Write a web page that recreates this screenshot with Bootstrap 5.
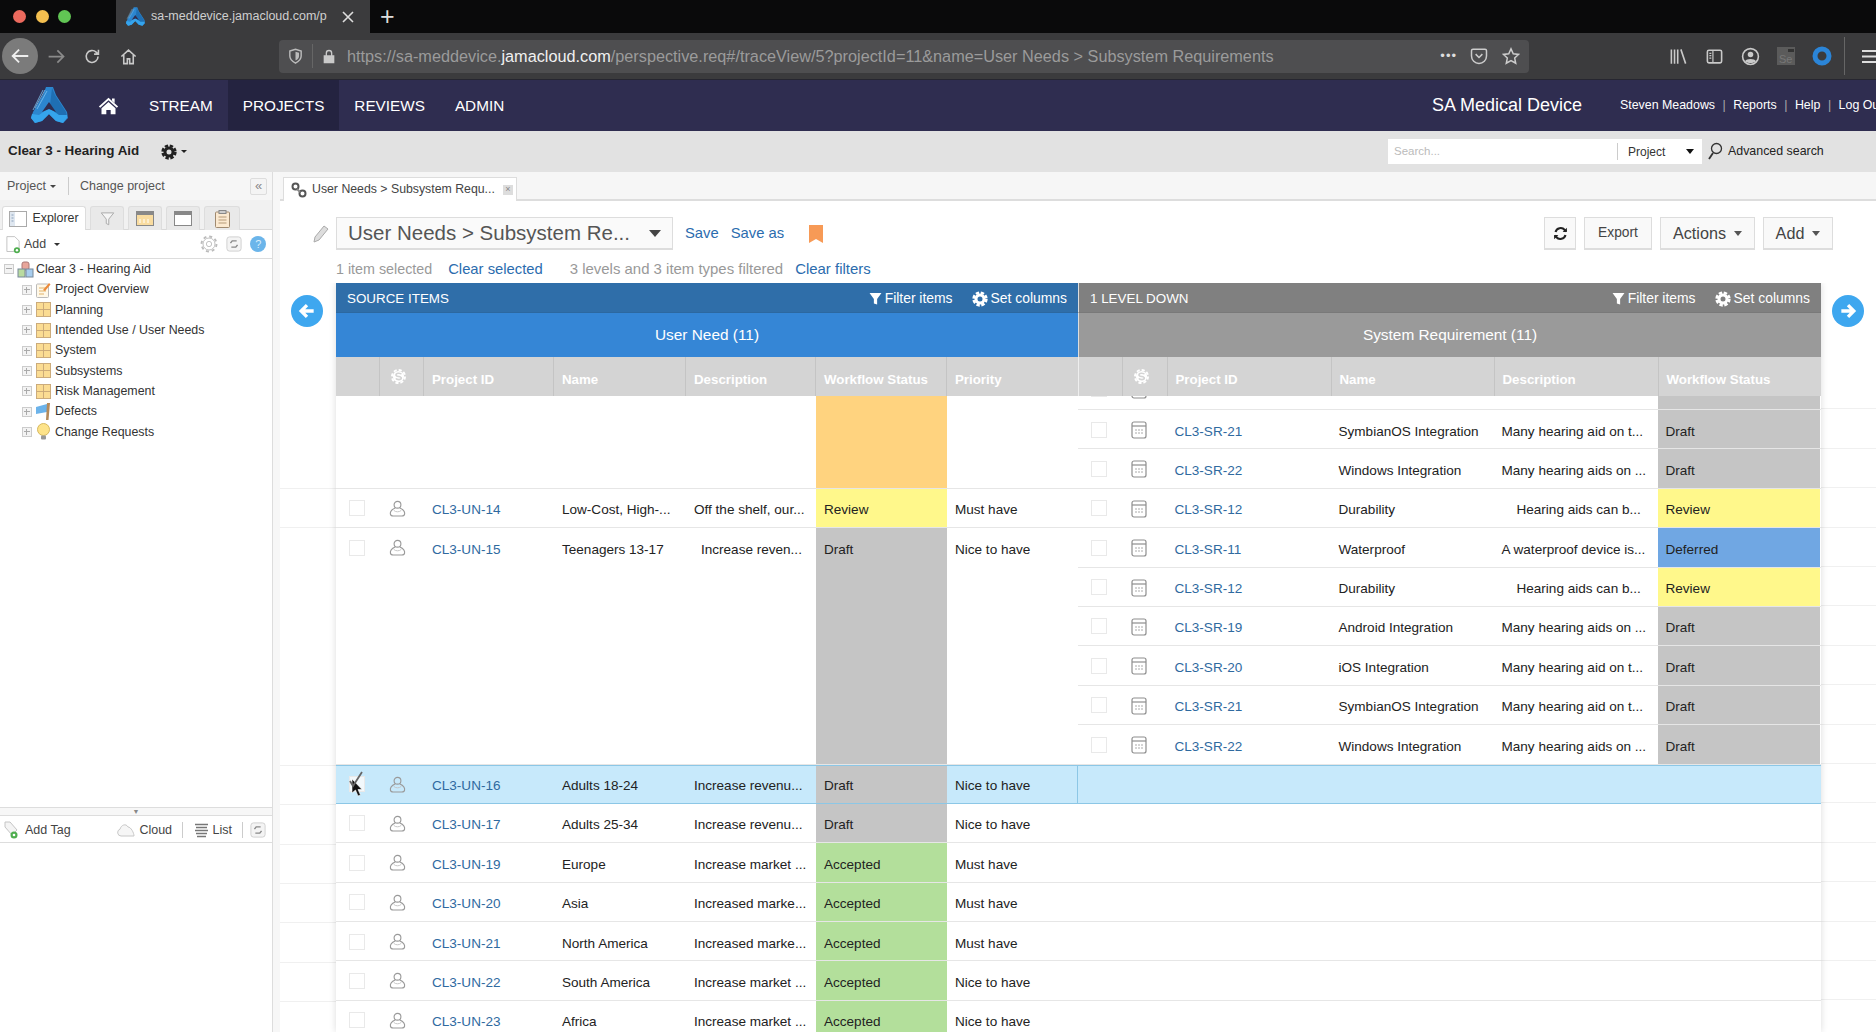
<!DOCTYPE html>
<html lang="en">
<head>
<meta charset="utf-8">
<title>User Needs &gt; Subsystem Requirements</title>
<link href="https://cdn.jsdelivr.net/npm/bootstrap@5.3.0/dist/css/bootstrap.min.css" rel="stylesheet">
<style>
html,body{height:100%;overflow:hidden}
body{font-family:"Liberation Sans",Arial,sans-serif;font-size:13px;color:#222;background:#fff}
.page-col{height:1032px;overflow:hidden}
svg{display:block;flex:none}
.ff-tabs{height:33px;background:#0a0a0b;flex:none}
.light{width:13px;height:13px;border-radius:50%;position:relative}
.lights{width:116px;padding-left:13px;gap:9.5px}
.ff-tab{width:254px;background:#3b3b3d;color:#cfcfcf;font-size:12.5px;padding-left:10px}
.ff-tab .ttl{width:183px;overflow:hidden;white-space:nowrap;margin-left:6px}
.ff-plus{color:#ddd;font-size:25px;font-weight:300;margin-left:10px;line-height:1}
.ff-bar{height:47px;background:#3b3b3d;border-bottom:1px solid #262630;flex:none;color:#c9c9c9}
.ff-back{width:36px;height:36px;border-radius:50%;background:#7b7b7b;margin-left:2px}
.ff-btn{width:36px;display:flex;justify-content:center}
.ff-url{width:1250px;height:33px;background:#4e4e50;border-radius:4px;margin-left:133px;font-size:16.25px;color:#9b9b9b;white-space:nowrap;padding:0 8px}
.ff-url b{font-weight:400;color:#f1f1f1}
.ff-sep{width:1px;height:24px;background:#666}
.ff-right{margin-left:131px;gap:0}
.jm-nav{height:51px;background:#2f2d50;flex:none;padding:0}
.navbar.jm-nav .navbar-nav .nav-link{color:#fff;font-size:15.3px;padding:2px 15px 0;height:50px;display:flex;align-items:center}
.navbar.jm-nav .navbar-nav .nav-link.active{background:#242340;color:#fff}
.brand-slot{width:84px;padding-left:31px}
.home-slot{width:50px;padding-left:13px}
.jm-org{color:#fff;font-size:18px;margin-right:38px}
.jm-user{color:#fff;font-size:12.4px;white-space:nowrap;width:256px;gap:7.5px;overflow:hidden}
.jm-user span{color:#aaa}
.sub-bar{height:41px;background:#e2e2e2;flex:none;padding-left:8px}
.sub-bar .ttl{font-weight:700;font-size:13.4px;margin-right:22px}
.sb-search{width:314px;height:25px;background:#fff;margin-left:auto;font-size:12px}
.sb-search .inp{width:229px;color:#bbb;padding-left:6px;font-size:11.5px}
.sb-search .pj{border-left:1px solid #ccc;height:17px;padding-left:10px;flex:1;color:#333}
.sb-adv{font-size:12.4px;width:174px;color:#222;padding-left:5px;gap:5px}
.lft{width:273px;border-right:1px solid #ddd;flex:none;background:#fff}
.lft-top{height:28px;background:#f6f6f6;font-size:12.5px;color:#555;padding-left:7px}
.lft-top .dv{width:1px;height:18px;background:#ccc;margin:0 11px 0 12px}
.sq{width:17px;height:17px;border:1px solid #ddd;border-radius:2px;background:#f4f4f4;color:#888;font-size:13px;line-height:13px;text-align:center}
.lft-tabs{height:30px;background:#f1f1f1;border-bottom:1px solid #d9d9d9;padding:6px 0 0 2px;gap:4px}
.ltab{height:24px;width:34px;background:#e9e9e9;border:1px solid #ddd;border-bottom:0;border-radius:3px 3px 0 0;display:flex;align-items:center;justify-content:center}
.ltab.on{width:84px;background:#fff;font-size:12.4px;color:#333;gap:5px}
.lft-add{height:29px;border-bottom:1px solid #ddd;padding-left:6px;font-size:12.4px;color:#444}
.tree{height:549px;border-bottom:1px solid #ddd;font-size:12.4px;color:#333;margin:0;padding:0;list-style:none}
.tree li{height:20.35px;display:flex;align-items:center;white-space:nowrap}
.tree .chd{padding-left:18px}
.tree .ic{margin-left:4px;margin-right:4px}
.tree .rt{margin:0 2px 0 3px}
.xp{width:10px;height:10px;border:1px solid #ccc;background:#f3f3f3;position:relative;margin-left:4px;flex:none}
.xp::before{content:"";position:absolute;left:1px;right:1px;top:3px;height:1px;background:#aaa}
.xp.pl::after{content:"";position:absolute;top:1px;bottom:1px;left:3px;width:1px;background:#aaa}
.grip{height:7px;display:flex;justify-content:center;align-items:center;background:#f7f7f7;color:#888;font-size:7px;line-height:1}
.tag-row{height:28px;border-top:1px solid #ddd;border-bottom:1px solid #ddd;padding:2px 0 0 4px;font-size:12.5px;color:#444}
.tag-row .dv{width:1px;height:16px;background:#ccc;margin:0 10px 0 10px}
.splt{width:7px;flex:none;background:#f7f7f7}
.mn{flex:1;min-width:0}
.mn-tabs{height:29px;background:#f6f6f6;border-bottom:2px solid #ddd;padding:5px 0 0 3px;flex:none}
.vtab{width:234px;height:24px;background:#fff;border:1px solid #ddd;border-bottom:0;font-size:12.3px;color:#444;padding-left:7px;gap:5px;white-space:nowrap}
.mn-tool{height:33px;margin-top:16px;padding-left:33px;padding-right:43px;flex:none}
.vsel{width:337px;height:33px;background:#fafafa;border:1px solid #ddd;border-bottom-width:2px;font-size:20.5px;color:#555;padding:0 11px;white-space:nowrap;margin-left:7px;justify-content:space-between}
.lnk{color:#2b6cae;text-decoration:none}
.sv{font-size:14.8px;margin-left:12px}
.tbtn{height:33px;background:#f9f9f9;border:1px solid #ddd;border-bottom-width:2px;border-radius:0;font-size:14px;color:#444;padding:0;display:flex;align-items:center;justify-content:center;gap:8px}
.caret-d{width:0;height:0;border-left:4.5px solid transparent;border-right:4.5px solid transparent;border-top:5px solid #555;display:inline-block}
.mn-info{height:33px;padding-left:56px;font-size:14.95px;color:#999;flex:none;padding-top:9px;line-height:20px}
.wrap-tv{flex:1;min-height:0;overflow:hidden}
.gut-l{width:56px;flex:none;padding:12px 0 0 11px;background:
 linear-gradient(#f0f0f0,#f0f0f0) 0 205px/100% 1px no-repeat,
 linear-gradient(#f0f0f0,#f0f0f0) 0 244px/100% 1px no-repeat,
 linear-gradient(#f0f0f0,#f0f0f0) 0 482px/100% 1px no-repeat,
 linear-gradient(#f0f0f0,#f0f0f0) 0 521px/100% 1px no-repeat,
 linear-gradient(#f0f0f0,#f0f0f0) 0 560.6px/100% 1px no-repeat,
 linear-gradient(#f0f0f0,#f0f0f0) 0 600px/100% 1px no-repeat,
 linear-gradient(#f0f0f0,#f0f0f0) 0 639.4px/100% 1px no-repeat,
 linear-gradient(#f0f0f0,#f0f0f0) 0 678.8px/100% 1px no-repeat,
 linear-gradient(#f0f0f0,#f0f0f0) 0 718.2px/100% 1px no-repeat}
.gut-r{flex:1;padding:12px 0 0 11px;background-image:repeating-linear-gradient(to bottom,#fff 0,#fff 38.4px,#f0f0f0 38.4px,#f0f0f0 39.4px);background-position:0 86.6px;background-repeat:no-repeat}
.circ{width:32px;height:32px;border-radius:50%;background:#3ea7ef;display:flex;align-items:center;justify-content:center}
.tv{width:1485px;flex:none;box-shadow:0 0 7px rgba(0,0,0,.14);background:#fff;position:relative}
.pane{flex:none}
.p-s{width:742px}
.p-t{width:743px}
.h1b{height:29.5px;color:#fff;padding:3px 11px 0 11px;font-size:13.4px;border-bottom:1px solid rgba(0,0,0,.05)}
.h1b .fi{font-size:13.9px;gap:3px}
.s1{background:#2f6ea9}
.s2{background:#3586d6}
.t1{background:#808080;border-left:1px solid #ddd}
.t2{background:#9a9a9a;border-left:1px solid #ddd}
.h2b{height:44.5px;color:#fff;font-size:15.4px}
.hd{height:39px;background:#d4d4d4}
.hd>div{border-right:1px solid #c4c4c4;color:#fff;font-weight:700;font-size:13.3px;padding:7px 0 0 8px;display:flex;align-items:center;white-space:nowrap;flex:none}
.hd .iconcol{padding:0 0 0 7px}
.w-a{width:44px}.w-b{width:44px}.w-c{width:130px}.w-d{width:132px}.w-e{width:130px}.w-f{width:131px}.w-g{width:131px}
.x-a{width:44px}.x-b{width:44.5px}.x-c{width:164px}.x-d{width:163px}.x-e{width:164px}.x-f{width:162.5px}
.bdy{height:636px;overflow:hidden}
.grp{border-bottom:1px solid #e6e6e6;display:flex}
.srcs{width:742px;display:flex;flex:none}
.tgts{width:743px;flex:none}
.cl{padding:11.5px 0 0 8px;line-height:19px;white-space:nowrap;overflow:hidden;flex:none;font-size:13.55px;color:#222}
.rw{display:flex;height:39.4px;border-bottom:1px solid #e6e6e6;flex:none}
.tgts>.rw:last-child{border-bottom:0;height:38.4px}
.clip{height:14px;overflow:hidden;display:flex;align-items:flex-end;border-bottom:1px solid #e6e6e6}
.clip .rw{border:0}
.id{color:#2f6a9f}
.in{padding-left:15px}
.in2{padding-left:23px}
.ck{width:16px;height:16px;border:1px solid #e9e9e9;background:#fff;margin:0 0 0 5px}
.cl.ic-c{padding:11px 0 0 9px}
.st-o{background:#ffd37f}.st-r{background:#fff88b}.st-d{background:#c5c5c5}.st-a{background:#b3df9b}.st-f{background:#70a7e3}
.r-sel{background:#c7e9fb;border-top:1px solid #8cc7e6;border-bottom:1px solid #8cc7e6}
.r-sel .cl{padding-top:10.5px}
.pos-ck{position:relative}
.cursor{position:absolute;left:15px;top:12px}
</style>
</head>
<body>
<svg width="0" height="0" style="position:absolute">
<defs>
<symbol id="i-jama" viewBox="0 0 37 36"><path d="M15 0h7l3 8 11 17 1 6-5 5-7-2-7-7-7 7-7 2-4-5 2-6L12 8z" fill="#2c86cf"/><path d="M21 1l3 7 11 17 1 6-5 4-7-2-6-6z" fill="#1f6fb3"/><path d="M1 27l7 1 10-7 10 7 8 0 0 3-4 5-7-2-7-7-7 7-7 2-4-5z" fill="#35a4ec"/><path d="M18 15l7 10-7-3-7 3z" fill="#2f2d50"/><path d="M14 3L4 21M12 3L2 23M16 4L6 22" stroke="#7cc0ee" stroke-width=".8" fill="none"/></symbol>
<symbol id="i-arrow" viewBox="0 0 24 24"><path d="M21 12H4M11 5l-7 7 7 7" fill="none" stroke="currentColor" stroke-width="2"/></symbol>
<symbol id="i-arrowr" viewBox="0 0 24 24"><path d="M3 12h17M13 5l7 7-7 7" fill="none" stroke="currentColor" stroke-width="2"/></symbol>
<symbol id="i-reload" viewBox="0 0 24 24"><path d="M19 12a7.500 7.500 0 1 1-2.400-5.500L19 9M19.500 3.500V9H14" fill="none" stroke="currentColor" stroke-width="2"/></symbol>
<symbol id="i-home" viewBox="0 0 24 24"><path d="M3 12l9-8 9 8M6 10v11h4.500v-6h3v6H18V10" fill="none" stroke="currentColor" stroke-width="2"/></symbol>
<symbol id="i-homef" viewBox="0 0 24 24"><path d="M12 3l11 10-1.500 1.500L12 6 2.500 14.500 1 13zM16 4h3v5l-3-2.700zM12 8l8 7v7h-5.500v-5h-5v5H4v-7z" fill="#fff"/></symbol>
<symbol id="i-shield" viewBox="0 0 24 24"><path d="M4 5l8-2.500L20 5v7c0 5-4 8-8 10-4-2-8-5-8-10z" fill="none" stroke="currentColor" stroke-width="2"/><path d="M12 6l5 1.500V12c0 3-2 5-5 6.500z" fill="currentColor"/></symbol>
<symbol id="i-lock" viewBox="0 0 24 24"><path d="M7 10V7a5 5 0 0 1 10 0v3M4 10h16v12H4z" fill="currentColor"/><path d="M9 10V7a3 3 0 0 1 6 0v3z" fill="#4e4e50"/></symbol>
<symbol id="i-pocket" viewBox="0 0 24 24"><path d="M4 3h16a2 2 0 0 1 2 2v7a10 10 0 0 1-20 0V5a2 2 0 0 1 2-2zM7.500 9.500l4.500 4.500 4.500-4.500" fill="none" stroke="currentColor" stroke-width="2"/></symbol>
<symbol id="i-star" viewBox="0 0 24 24"><path d="M12 2.500l3 6.500 7 .9-5.100 4.800 1.400 7L12 18.200l-6.300 3.500 1.400-7L2 9.900 9 9z" fill="none" stroke="currentColor" stroke-width="2"/></symbol>
<symbol id="i-lib" viewBox="0 0 24 24"><path d="M3 3v18M7 3v18M11 3v18M15 3l6 18" fill="none" stroke="currentColor" stroke-width="2"/></symbol>
<symbol id="i-side" viewBox="0 0 24 24"><rect x="3" y="4" width="18" height="16" rx="2" fill="none" stroke="currentColor" stroke-width="2"/><path d="M10 4v16M5.500 8H8M5.500 11H8M5.500 14H8" stroke="currentColor" stroke-width="1.500"/></symbol>
<symbol id="i-acct" viewBox="0 0 24 24"><circle cx="12" cy="12" r="10" fill="none" stroke="currentColor" stroke-width="2"/><circle cx="12" cy="9.500" r="3.500" fill="currentColor"/><path d="M5 18c2-4 12-4 14 0-3 3-11 3-14 0z" fill="currentColor"/></symbol>
<symbol id="i-gear" viewBox="0 0 24 24"><circle cx="12" cy="12" r="6" fill="none" stroke="currentColor" stroke-width="4.500"/><circle cx="12" cy="12" r="9.500" fill="none" stroke="currentColor" stroke-width="4" stroke-dasharray="5 2.460"/></symbol>
<symbol id="i-gearo" viewBox="0 0 24 24"><circle cx="12" cy="12" r="3.500" fill="none" stroke="currentColor" stroke-width="1.200"/><circle cx="12" cy="12" r="8" fill="none" stroke="currentColor" stroke-width="1.200"/><circle cx="12" cy="12" r="10" fill="none" stroke="currentColor" stroke-width="2.500" stroke-dasharray="4 3.850"/></symbol>
<symbol id="i-funnel" viewBox="0 0 24 24"><path d="M1 2h22l-8 11v10l-6-2v-8z" fill="currentColor"/></symbol>
<symbol id="i-funnelo" viewBox="0 0 24 24"><path d="M2 3h20l-8 10v9l-4-2v-7z" fill="#f5f5f5" stroke="#a8a8a8" stroke-width="1.500"/></symbol>
<symbol id="i-pers" viewBox="0 0 18 18"><circle cx="9" cy="5" r="3.600" fill="none" stroke="#9a9a9a" stroke-width="1.200"/><path d="M6.500 8.500C3 10 1 12 1.500 15c.2 1.500 2 2 3 2h9c1 0 2.800-.5 3-2 .5-3-1.500-5-5-6.500" fill="none" stroke="#9a9a9a" stroke-width="1.200"/><path d="M5 11c2 2 6 2 8 0" fill="none" stroke="#c4c4c4"/></symbol>
<symbol id="i-doc" viewBox="0 0 16 18"><rect x="1" y="1" width="14" height="16" rx="2" fill="#fff" stroke="#8e8e8e" stroke-width="1.200"/><path d="M1 5h14" stroke="#8e8e8e" stroke-width="1.200"/><path d="M4 9h2M7 9h2M10 9h2M4 12h2M7 12h2M10 12h2" stroke="#aaa"/></symbol>
<symbol id="i-grid" viewBox="0 0 16 16"><rect x=".5" y=".5" width="15" height="15" fill="#fbdc93" stroke="#c9a877"/><path d="M8 1v14M1 8h14" stroke="#c9a877"/></symbol>
<symbol id="i-filetag" viewBox="0 0 16 20"><path d="M1 1h9l5 5v12H1z" fill="#fff" stroke="#bdbdbd"/><circle cx="12.500" cy="16.500" r="3.500" fill="#4fae4f"/><circle cx="12.500" cy="16.500" r="1.400" fill="#fff"/></symbol>
<symbol id="i-sync" viewBox="0 0 18 18"><rect x="1" y="1" width="16" height="16" rx="3" fill="#f4f4f4" stroke="#ccc"/><path d="M5 8l2-2.500h5M13 10l-2 2.500H6" fill="none" stroke="#888" stroke-width="1.600"/></symbol>
<symbol id="i-refresh" viewBox="0 0 24 24"><path d="M5 10a7.500 7.500 0 0 1 13-3l2 2M19 14a7.500 7.500 0 0 1-13 3l-2-2" fill="none" stroke="#222" stroke-width="3"/><path d="M21 4v6h-6zM3 20v-6h6z" fill="#222"/></symbol>
<symbol id="i-back" viewBox="0 0 24 24"><path d="M20 12H6M12 5l-7 7 7 7" fill="none" stroke="#fff" stroke-width="4"/></symbol>
<symbol id="i-fwd" viewBox="0 0 24 24"><path d="M4 12h14M12 5l7 7-7 7" fill="none" stroke="#fff" stroke-width="4"/></symbol>
<symbol id="i-scol" viewBox="0 0 24 24"><circle cx="12" cy="12" r="9" fill="#fff"/><circle cx="12" cy="12" r="10.500" fill="none" stroke="#fff" stroke-width="3" stroke-dasharray="5 3.240"/><path d="M16.500 8.500c-1-2.500-8.500-2.500-8.500 1s8.500 1.500 8.500 5-7.500 3-8.500.5" fill="none" stroke="#d4d4d4" stroke-width="2.600"/></symbol>
</defs>
</svg>

<div class="page-col d-flex flex-column">
  <!-- browser tabs -->
  <div class="ff-tabs d-flex align-items-center">
    <div class="lights d-flex align-items-center">
      <span class="light" style="background:#ec6a5e"></span><span class="light" style="background:#f4bf4f"></span><span class="light" style="background:#61c554"></span>
    </div>
    <div class="ff-tab h-100 d-flex align-items-center">
      <svg width="19" height="19"><use href="#i-jama"/></svg>
      <span class="ttl">sa-meddevice.jamacloud.com/p</span>
      <svg class="ms-2" width="12" height="12" viewBox="0 0 12 12"><path d="M1 1l10 10M11 1L1 11" stroke="#ddd" stroke-width="1.600"/></svg>
    </div>
    <span class="ff-plus">+</span>
  </div>
  <!-- browser toolbar -->
  <div class="ff-bar d-flex align-items-center">
    <div class="ff-back d-flex align-items-center justify-content-center" style="color:#eee"><svg width="22" height="22"><use href="#i-arrow"/></svg></div>
    <div class="ff-btn" style="color:#8b8b8b"><svg width="21" height="21"><use href="#i-arrowr"/></svg></div>
    <div class="ff-btn"><svg width="19" height="19"><use href="#i-reload"/></svg></div>
    <div class="ff-btn"><svg width="19" height="19"><use href="#i-home"/></svg></div>
    <div class="ff-url d-flex align-items-center">
      <svg width="17" height="18" style="color:#bbb"><use href="#i-shield"/></svg>
      <span class="ff-sep mx-2"></span>
      <svg width="16" height="17" style="color:#c9c9c9"><use href="#i-lock"/></svg>
      <span class="flex-grow-1" style="margin-left:10px">https://sa-meddevice.<b>jamacloud.com</b>/perspective.req#/traceView/5?projectId=11&amp;name=User Needs &gt; Subsystem Requirements</span>
      <span style="color:#ddd;font-size:13px;letter-spacing:1px;margin-right:13px">•••</span>
      <svg width="18" height="18" style="color:#ccc;margin-right:14px"><use href="#i-pocket"/></svg>
      <svg width="18" height="18" style="color:#ccc;margin-right:1px"><use href="#i-star"/></svg>
    </div>
    <div class="ff-right d-flex align-items-center">
      <div class="ff-btn"><svg width="19" height="19"><use href="#i-lib"/></svg></div>
      <div class="ff-btn"><svg width="19" height="19"><use href="#i-side"/></svg></div>
      <div class="ff-btn"><svg width="19" height="19"><use href="#i-acct"/></svg></div>
      <div class="ff-btn"><svg width="18" height="18" viewBox="0 0 18 18"><rect width="18" height="18" fill="#5b5b5b"/><rect x="11" y="2" width="6" height="3" fill="#333"/><text x="2" y="16" font-size="11" fill="#777" font-family="Liberation Sans">Se</text></svg></div>
      <div class="ff-btn"><svg width="20" height="20" viewBox="0 0 20 20"><circle cx="10" cy="10" r="7" fill="none" stroke="#2b85d8" stroke-width="5"/></svg></div>
      <span class="ff-sep" style="margin-left:4px;height:38px"></span>
      <div style="width:31px;padding-left:17px"><svg width="14" height="15" viewBox="0 0 14 15"><path d="M0 2h14M0 7.500h14M0 13h14" stroke="#ddd" stroke-width="2"/></svg></div>
    </div>
  </div>
  <!-- app nav -->
  <nav class="navbar navbar-expand jm-nav d-flex align-items-start">
    <div class="brand-slot d-flex align-items-center" style="height:50px"><svg width="37" height="36"><use href="#i-jama"/></svg></div>
    <div class="home-slot d-flex align-items-center" style="height:50px"><svg width="23" height="21"><use href="#i-homef"/></svg></div>
    <ul class="navbar-nav">
      <li class="nav-item"><a class="nav-link" href="#">STREAM</a></li>
      <li class="nav-item"><a class="nav-link active" href="#">PROJECTS</a></li>
      <li class="nav-item"><a class="nav-link" href="#">REVIEWS</a></li>
      <li class="nav-item"><a class="nav-link" href="#">ADMIN</a></li>
    </ul>
    <div class="ms-auto d-flex align-items-center" style="height:50px">
      <span class="jm-org">SA Medical Device</span>
      <div class="jm-user d-flex align-items-center">Steven Meadows <span>|</span> Reports <span>|</span> Help <span>|</span> Log Out</div>
    </div>
  </nav>
  <!-- project bar -->
  <div class="sub-bar d-flex align-items-center">
    <span class="ttl">Clear 3 - Hearing Aid</span>
    <svg width="16" height="16" style="color:#222"><use href="#i-gear"/></svg>
    <span class="caret-d ms-1" style="border-top-color:#222;border-width:3.500px 3px 0"></span>
    <div class="sb-search d-flex align-items-center">
      <span class="inp">Search...</span>
      <span class="pj d-flex align-items-center justify-content-between pe-2">Project <span class="caret-d" style="border-top-color:#111"></span></span>
    </div>
    <div class="sb-adv d-flex align-items-center">
      <svg width="16" height="18" viewBox="0 0 16 18"><circle cx="9.500" cy="6.500" r="5" fill="none" stroke="#333" stroke-width="1.300"/><path d="M6 11l-4 6" stroke="#333" stroke-width="1.800"/></svg>
      Advanced search
    </div>
  </div>

  <div class="d-flex flex-grow-1" style="min-height:0">
    <!-- left panel -->
    <aside class="lft d-flex flex-column">
      <div class="lft-top d-flex align-items-center">
        Project <span class="caret-d ms-1" style="border-width:3.500px 3px 0;border-top-color:#444"></span>
        <span class="dv"></span> Change project
        <span class="sq ms-auto" style="margin-right:5px">«</span>
      </div>
      <div class="lft-tabs d-flex">
        <div class="ltab on">
          <svg width="18" height="16" viewBox="0 0 18 16"><rect x=".5" y=".5" width="17" height="15" fill="#fff" stroke="#aaa"/><rect x="1" y="1" width="5" height="14" fill="#dfe7f0"/><path d="M2.500 4h2M2.500 7h2M2.500 10h2" stroke="#8aa0bb"/></svg>Explorer
        </div>
        <div class="ltab"><svg width="15" height="17"><use href="#i-funnelo"/></svg></div>
        <div class="ltab"><svg width="18" height="15" viewBox="0 0 18 15"><rect x=".5" y=".5" width="17" height="14" fill="#f9dca0" stroke="#888"/><rect x="1" y="1" width="16" height="3" fill="#888"/><path d="M4 8v4M8 8v4M12 8v4" stroke="#fff"/></svg></div>
        <div class="ltab"><svg width="18" height="15" viewBox="0 0 18 15"><rect x=".5" y=".5" width="17" height="14" fill="#fff" stroke="#888"/><rect x="1" y="1" width="16" height="3" fill="#888"/></svg></div>
        <div class="ltab" style="width:36px"><svg width="15" height="18" viewBox="0 0 15 18"><rect x=".5" y="2" width="14" height="15.500" rx="1" fill="#fbe9d0" stroke="#a08a70"/><rect x="4" y=".5" width="7" height="3" fill="#ccc" stroke="#888"/><path d="M3.500 7h8M3.500 10h8M3.500 13h8" stroke="#b59a78"/></svg></div>
      </div>
      <div class="lft-add d-flex align-items-center">
        <svg width="14" height="19"><use href="#i-filetag"/></svg>
        <span class="ms-1">Add</span><span class="caret-d ms-2" style="border-width:3.500px 3px 0;border-top-color:#333"></span>
        <svg class="ms-auto" width="18" height="18" style="color:#bbb"><use href="#i-gearo"/></svg>
        <svg class="ms-2" width="16" height="16"><use href="#i-sync"/></svg>
        <svg style="margin:0 6px 0 8px" width="16" height="16" viewBox="0 0 16 16"><circle cx="8" cy="8" r="8" fill="#6bb5ea"/><text x="5.200" y="12" font-size="11" fill="#d8eefc" font-family="Liberation Sans">?</text></svg>
      </div>
      <ul class="tree">
        <li><span class="xp"></span><svg class="rt" width="17" height="17" viewBox="0 0 17 17"><rect x="5" y="1" width="7" height="8" rx="2" fill="#e8a59a" stroke="#a77"/><rect x="1" y="8" width="7" height="8" fill="#b9dba0" stroke="#789"/><rect x="9" y="8" width="7" height="8" fill="#a8cdee" stroke="#789"/></svg>Clear 3 - Hearing Aid</li>
        <li class="chd"><span class="xp pl"></span><svg class="ic" width="15" height="16" viewBox="0 0 15 16"><rect x=".5" y="2" width="12" height="13.500" rx="1" fill="#fff8e8" stroke="#bbb"/><path d="M3 6h7M3 9h7M3 12h5" stroke="#e0b36a"/><path d="M7 8l6-7 1.500 1.500L9 9z" fill="#ec8a3a"/></svg>Project Overview</li>
        <li class="chd"><span class="xp pl"></span><svg class="ic" width="15" height="15"><use href="#i-grid"/></svg>Planning</li>
        <li class="chd"><span class="xp pl"></span><svg class="ic" width="15" height="15"><use href="#i-grid"/></svg>Intended Use / User Needs</li>
        <li class="chd"><span class="xp pl"></span><svg class="ic" width="15" height="15"><use href="#i-grid"/></svg>System</li>
        <li class="chd"><span class="xp pl"></span><svg class="ic" width="15" height="15"><use href="#i-grid"/></svg>Subsystems</li>
        <li class="chd"><span class="xp pl"></span><svg class="ic" width="15" height="15"><use href="#i-grid"/></svg>Risk Management</li>
        <li class="chd"><span class="xp pl"></span><svg class="ic" width="15" height="17" viewBox="0 0 15 17"><path d="M0 4l11-3v8L0 11z" fill="#6cb3ea"/><path d="M11 0h3l-1.500 17H10z" fill="#b58a5a"/></svg>Defects</li>
        <li class="chd"><span class="xp pl"></span><svg class="ic" width="15" height="17" viewBox="0 0 15 17"><circle cx="7.500" cy="6.500" r="6" fill="#fde38a" stroke="#d7b85e"/><rect x="5" y="12.500" width="5" height="4" rx="1" fill="#999"/></svg>Change Requests</li>
      </ul>
      <div class="grip">▼</div>
      <div class="tag-row d-flex align-items-center">
        <svg width="14" height="18" viewBox="0 0 14 18"><path d="M1 1h5l7 8-5 5-7-8z" fill="#f4f4f4" stroke="#c4c4c4"/><circle cx="10" cy="14" r="3.500" fill="#4fae4f"/><circle cx="10" cy="14" r="1.300" fill="#fff"/></svg>
        <span style="margin-left:7px">Add Tag</span>
        <svg class="ms-auto me-1" width="18" height="14" viewBox="0 0 18 14"><path d="M4 13a3.500 3.500 0 0 1-1-6.800C4 2 9 0 11 4c3 0 6 6 6 9z" fill="#f6f6f6" stroke="#c8c8c8"/></svg>Cloud
        <span class="dv" style="margin:0 11px 0 9.5px"></span>
        <svg class="me-1" width="15" height="15" viewBox="0 0 15 15"><path d="M1 1.500h13M2 4.500h11M1 7.500h13M2 10.500h11M3 13.500h9" stroke="#777" stroke-width="1.300"/></svg>List
        <span class="dv" style="margin-right:7px"></span>
        <svg style="margin-right:6px" width="16" height="18"><use href="#i-sync"/></svg>
      </div>
    </aside>
    <div class="splt"></div>

    <!-- main -->
    <main class="mn d-flex flex-column">
      <div class="mn-tabs d-flex">
        <div class="vtab d-flex align-items-center">
          <svg width="16" height="16" viewBox="0 0 16 16"><circle cx="4.500" cy="4.500" r="3" fill="none" stroke="#555" stroke-width="2"/><circle cx="11.500" cy="11.500" r="3" fill="none" stroke="#555" stroke-width="2"/><path d="M6 7l3 3" stroke="#888" stroke-width="2"/></svg>
          User Needs &gt; Subsystem Requ...
          <span class="ms-auto d-flex align-items-center justify-content-center" style="width:10px;height:10px;background:#ddd;color:#888;font-size:9px;margin-right:3px;line-height:1">×</span>
        </div>
      </div>
      <div class="mn-tool d-flex align-items-center">
        <svg width="16" height="18" viewBox="0 0 16 18"><path d="M11 1l4 3L6 15l-5 2 1-5z" fill="#ddd" stroke="#aaa"/></svg>
        <div class="vsel d-flex align-items-center">User Needs &gt; Subsystem Re...<span class="caret-d" style="border-width:7px 6px 0;border-top-color:#444"></span></div>
        <a class="lnk sv" href="#">Save</a><a class="lnk sv" href="#">Save as</a>
        <svg style="margin-left:25px" width="14" height="18" viewBox="0 0 14 18"><path d="M0 0h14v18l-7-4-7 4z" fill="#f79a56"/></svg>
        <div class="ms-auto d-flex gap-2">
          <button class="btn tbtn" style="width:32px" type="button" aria-label="Refresh"><svg width="17" height="17"><use href="#i-refresh"/></svg></button>
          <button class="btn tbtn" style="width:68px;font-size:13.8px" type="button">Export</button>
          <button class="btn tbtn" style="width:95px;font-size:16.2px" type="button">Actions <span class="caret-d"></span></button>
          <button class="btn tbtn" style="width:70px;font-size:16.2px" type="button">Add <span class="caret-d"></span></button>
        </div>
      </div>
      <div class="mn-info d-flex">
        <span style="font-size:14.3px">1 item selected</span><a class="lnk" style="margin-left:16px;font-size:14.8px" href="#">Clear selected</a>
        <span style="margin-left:27px">3 levels and 3 item types filtered</span><a class="lnk" style="margin-left:12px" href="#">Clear filters</a>
      </div>

      <div class="wrap-tv d-flex">
        <div class="gut-l"><div class="circ"><svg width="20" height="20"><use href="#i-back"/></svg></div></div>
        <div class="tv">
          <div class="d-flex">
            <div class="pane p-s">
              <div class="h1b s1 d-flex align-items-center justify-content-between"><span>SOURCE ITEMS</span><span class="fi d-flex align-items-center"><svg width="13" height="15" style="color:#fff"><use href="#i-funnel"/></svg>Filter items<svg class="ms-3" width="16" height="16" style="color:#fff"><use href="#i-gear"/></svg>Set columns</span></div>
              <div class="h2b s2 d-flex align-items-center justify-content-center">User Need (11)</div>
              <div class="hd d-flex"><div class="w-a"></div><div class="w-b iconcol"><svg class="ms-1" width="15" height="15"><use href="#i-scol"/></svg></div><div class="w-c">Project ID</div><div class="w-d">Name</div><div class="w-e">Description</div><div class="w-f">Workflow Status</div><div class="w-g" style="border:0">Priority</div></div>
            </div>
            <div class="pane p-t">
              <div class="h1b t1 d-flex align-items-center justify-content-between"><span>1 LEVEL DOWN</span><span class="fi d-flex align-items-center"><svg width="13" height="15" style="color:#fff"><use href="#i-funnel"/></svg>Filter items<svg class="ms-3" width="16" height="16" style="color:#fff"><use href="#i-gear"/></svg>Set columns</span></div>
              <div class="h2b t2 d-flex align-items-center justify-content-center">System Requirement (11)</div>
              <div class="hd d-flex" style="border-left:1px solid #eee"><div class="x-a"></div><div class="x-b iconcol"><svg class="ms-1" width="15" height="15"><use href="#i-scol"/></svg></div><div class="x-c">Project ID</div><div class="x-d">Name</div><div class="x-e">Description</div><div class="x-f" style="border:0">Workflow Status</div></div>
            </div>
          </div>

          <div class="bdy">
            <div class="grp">
              <div class="srcs"><div class="cl w-a"></div><div class="cl w-b"></div><div class="cl w-c"></div><div class="cl w-d"></div><div class="cl w-e"></div><div class="cl w-f st-o"></div><div class="cl w-g"></div></div>
              <div class="tgts">
                <div class="clip"><div class="rw">
                  <div class="cl x-a"><div class="ck"></div></div><div class="cl x-b ic-c"><svg width="16" height="18"><use href="#i-doc"/></svg></div><div class="cl x-c"></div><div class="cl x-d"></div><div class="cl x-e"></div><div class="cl x-f st-d"></div>
                </div></div>
                <div class="rw"><div class="cl x-a"><div class="ck"></div></div><div class="cl x-b ic-c"><svg width="16" height="18"><use href="#i-doc"/></svg></div><div class="cl x-c id">CL3-SR-21</div><div class="cl x-d">SymbianOS Integration</div><div class="cl x-e">Many hearing aid on t...</div><div class="cl x-f st-d">Draft</div></div>
                <div class="rw"><div class="cl x-a"><div class="ck"></div></div><div class="cl x-b ic-c"><svg width="16" height="18"><use href="#i-doc"/></svg></div><div class="cl x-c id">CL3-SR-22</div><div class="cl x-d">Windows Integration</div><div class="cl x-e">Many hearing aids on ...</div><div class="cl x-f st-d">Draft</div></div>
              </div>
            </div>
            <div class="grp">
              <div class="srcs"><div class="cl w-a"><div class="ck"></div></div><div class="cl w-b ic-c"><svg width="17" height="17"><use href="#i-pers"/></svg></div><div class="cl w-c id">CL3-UN-14</div><div class="cl w-d">Low-Cost, High-...</div><div class="cl w-e">Off the shelf, our...</div><div class="cl w-f st-r">Review</div><div class="cl w-g">Must have</div></div>
              <div class="tgts">
                <div class="rw"><div class="cl x-a"><div class="ck"></div></div><div class="cl x-b ic-c"><svg width="16" height="18"><use href="#i-doc"/></svg></div><div class="cl x-c id">CL3-SR-12</div><div class="cl x-d">Durability</div><div class="cl x-e in2">Hearing aids can b...</div><div class="cl x-f st-r">Review</div></div>
              </div>
            </div>
            <div class="grp">
              <div class="srcs"><div class="cl w-a"><div class="ck"></div></div><div class="cl w-b ic-c"><svg width="17" height="17"><use href="#i-pers"/></svg></div><div class="cl w-c id">CL3-UN-15</div><div class="cl w-d">Teenagers 13-17</div><div class="cl w-e in">Increase reven...</div><div class="cl w-f st-d">Draft</div><div class="cl w-g">Nice to have</div></div>
              <div class="tgts">
                <div class="rw"><div class="cl x-a"><div class="ck"></div></div><div class="cl x-b ic-c"><svg width="16" height="18"><use href="#i-doc"/></svg></div><div class="cl x-c id">CL3-SR-11</div><div class="cl x-d">Waterproof</div><div class="cl x-e">A waterproof device is...</div><div class="cl x-f st-f">Deferred</div></div>
                <div class="rw"><div class="cl x-a"><div class="ck"></div></div><div class="cl x-b ic-c"><svg width="16" height="18"><use href="#i-doc"/></svg></div><div class="cl x-c id">CL3-SR-12</div><div class="cl x-d">Durability</div><div class="cl x-e in2">Hearing aids can b...</div><div class="cl x-f st-r">Review</div></div>
                <div class="rw"><div class="cl x-a"><div class="ck"></div></div><div class="cl x-b ic-c"><svg width="16" height="18"><use href="#i-doc"/></svg></div><div class="cl x-c id">CL3-SR-19</div><div class="cl x-d">Android Integration</div><div class="cl x-e">Many hearing aids on ...</div><div class="cl x-f st-d">Draft</div></div>
                <div class="rw"><div class="cl x-a"><div class="ck"></div></div><div class="cl x-b ic-c"><svg width="16" height="18"><use href="#i-doc"/></svg></div><div class="cl x-c id">CL3-SR-20</div><div class="cl x-d">iOS Integration</div><div class="cl x-e">Many hearing aid on t...</div><div class="cl x-f st-d">Draft</div></div>
                <div class="rw"><div class="cl x-a"><div class="ck"></div></div><div class="cl x-b ic-c"><svg width="16" height="18"><use href="#i-doc"/></svg></div><div class="cl x-c id">CL3-SR-21</div><div class="cl x-d">SymbianOS Integration</div><div class="cl x-e">Many hearing aid on t...</div><div class="cl x-f st-d">Draft</div></div>
                <div class="rw"><div class="cl x-a"><div class="ck"></div></div><div class="cl x-b ic-c"><svg width="16" height="18"><use href="#i-doc"/></svg></div><div class="cl x-c id">CL3-SR-22</div><div class="cl x-d">Windows Integration</div><div class="cl x-e">Many hearing aids on ...</div><div class="cl x-f st-d">Draft</div></div>
              </div>
            </div>
            <div class="rw r-sel">
              <div class="cl w-a pos-ck"><div class="ck" style="background:#f2f8fb"></div>
                <svg class="cursor" width="11" height="19" viewBox="0 0 11 19"><path d="M1 1v14l3.500-3 2.500 6 2.500-1-2.500-5.500H11z" fill="#111" stroke="#fff" stroke-width=".6"/></svg>
                <svg class="position-absolute" style="left:11px;top:5px" width="17" height="18" viewBox="0 0 17 18"><path d="M3 10l3 5 9-14" fill="none" stroke="#666" stroke-width="1.800"/></svg>
              </div>
              <div class="cl w-b ic-c"><svg width="17" height="17"><use href="#i-pers"/></svg></div><div class="cl w-c id">CL3-UN-16</div><div class="cl w-d">Adults 18-24</div><div class="cl w-e">Increase revenu...</div><div class="cl w-f st-d">Draft</div><div class="cl w-g" style="border-right:1px solid #8cc7e6">Nice to have</div>
            </div>
            <div class="rw"><div class="cl w-a"><div class="ck"></div></div><div class="cl w-b ic-c"><svg width="17" height="17"><use href="#i-pers"/></svg></div><div class="cl w-c id">CL3-UN-17</div><div class="cl w-d">Adults 25-34</div><div class="cl w-e">Increase revenu...</div><div class="cl w-f st-d">Draft</div><div class="cl w-g">Nice to have</div></div>
            <div class="rw"><div class="cl w-a"><div class="ck"></div></div><div class="cl w-b ic-c"><svg width="17" height="17"><use href="#i-pers"/></svg></div><div class="cl w-c id">CL3-UN-19</div><div class="cl w-d">Europe</div><div class="cl w-e">Increase market ...</div><div class="cl w-f st-a">Accepted</div><div class="cl w-g">Must have</div></div>
            <div class="rw"><div class="cl w-a"><div class="ck"></div></div><div class="cl w-b ic-c"><svg width="17" height="17"><use href="#i-pers"/></svg></div><div class="cl w-c id">CL3-UN-20</div><div class="cl w-d">Asia</div><div class="cl w-e">Increased marke...</div><div class="cl w-f st-a">Accepted</div><div class="cl w-g">Must have</div></div>
            <div class="rw"><div class="cl w-a"><div class="ck"></div></div><div class="cl w-b ic-c"><svg width="17" height="17"><use href="#i-pers"/></svg></div><div class="cl w-c id">CL3-UN-21</div><div class="cl w-d">North America</div><div class="cl w-e">Increased marke...</div><div class="cl w-f st-a">Accepted</div><div class="cl w-g">Must have</div></div>
            <div class="rw"><div class="cl w-a"><div class="ck"></div></div><div class="cl w-b ic-c"><svg width="17" height="17"><use href="#i-pers"/></svg></div><div class="cl w-c id">CL3-UN-22</div><div class="cl w-d">South America</div><div class="cl w-e">Increase market ...</div><div class="cl w-f st-a">Accepted</div><div class="cl w-g">Nice to have</div></div>
            <div class="rw"><div class="cl w-a"><div class="ck"></div></div><div class="cl w-b ic-c"><svg width="17" height="17"><use href="#i-pers"/></svg></div><div class="cl w-c id">CL3-UN-23</div><div class="cl w-d">Africa</div><div class="cl w-e">Increase market ...</div><div class="cl w-f st-a">Accepted</div><div class="cl w-g">Nice to have</div></div>
          </div>
        </div>
        <div class="gut-r"><div class="circ"><svg width="20" height="20"><use href="#i-fwd"/></svg></div></div>
      </div>
    </main>
  </div>
</div>
<script src="https://cdn.jsdelivr.net/npm/bootstrap@5.3.0/dist/js/bootstrap.bundle.min.js"></script>
</body>
</html>
